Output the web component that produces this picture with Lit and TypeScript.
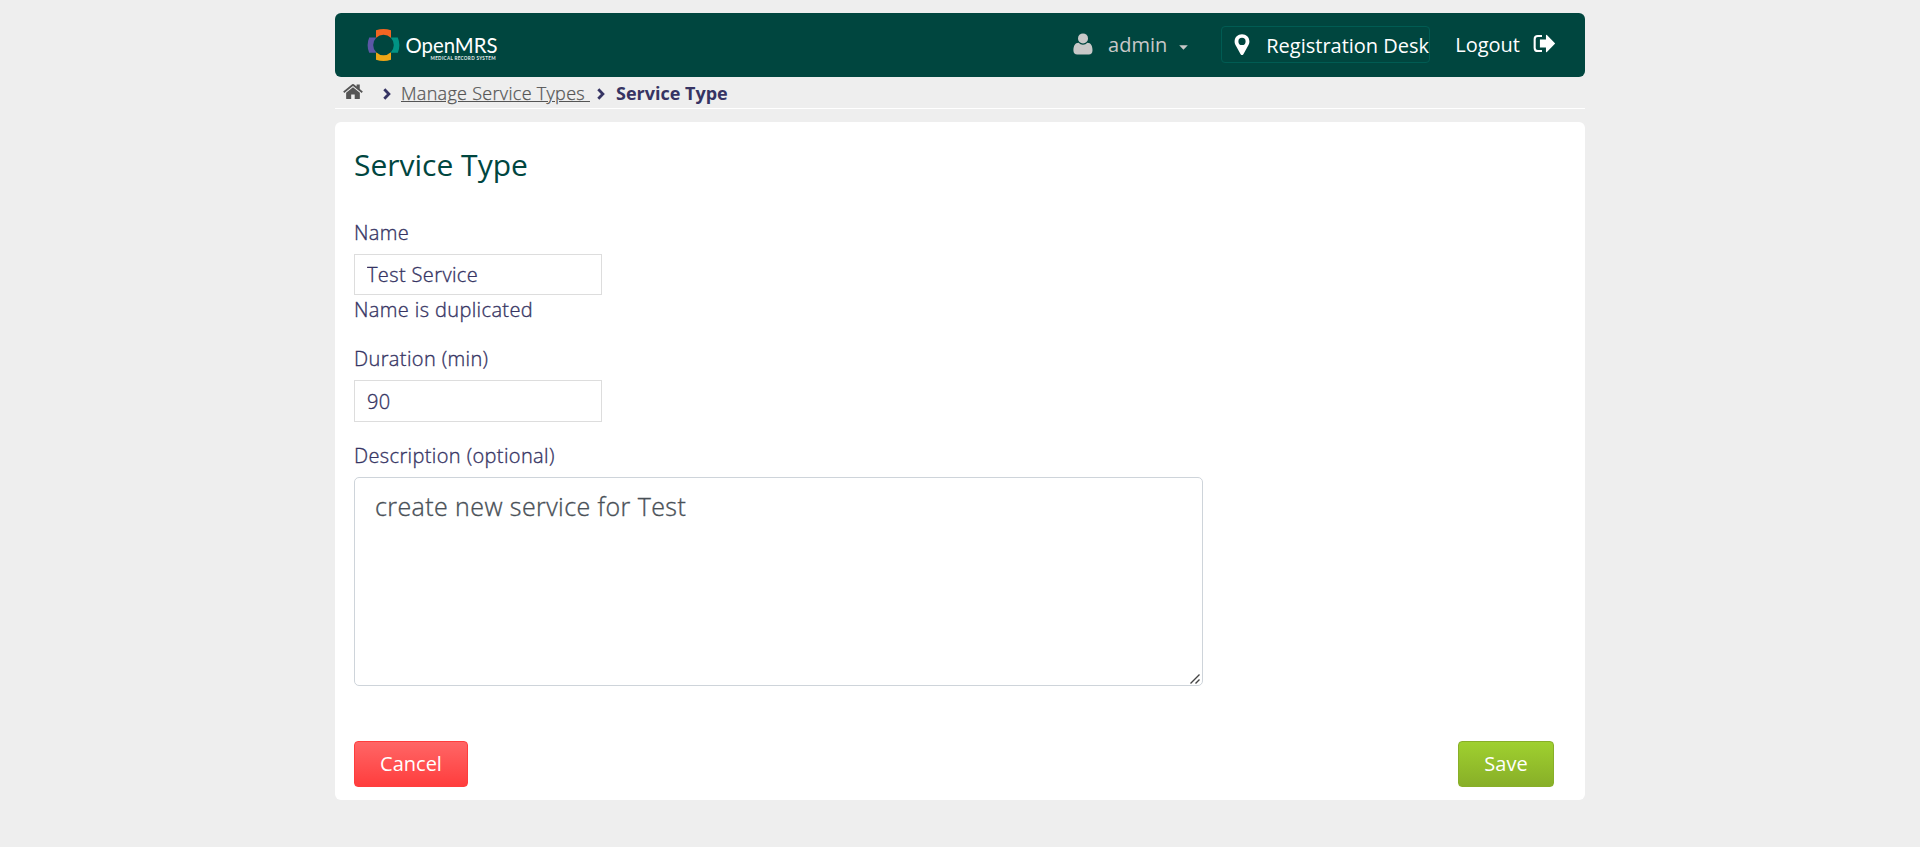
import { LitElement, html, css } from "lit";
import { customElement, property } from "lit/decorators.js";

@customElement("brand-logo")
class BrandLogo extends LitElement {
  static styles = css`
    :host { display: block; width: 140px; height: 40px; }
    svg { display: block; }
    .word { font: 400 21px Lato, sans-serif; fill: #fff; }
    .tag { font: 700 4.6px Lato, sans-serif; fill: #e4ecea; }
  `;
  render() {
    return html`<svg width="140" height="40" viewBox="0 0 140 40">
      <path d="M10 5.2Q17.5 2.6 25 5.2V13H10Z" fill="#f26522" />
      <path d="M10 34.8Q17.5 37.4 25 34.8V27H10Z" fill="#eea616" />
      <path d="M3.2 12.4Q0 20 3.2 27.7H10V12.4Z" fill="#5b57a6" />
      <path d="M31.8 12.4Q35 20 31.8 27.7H25V12.4Z" fill="#009384" />
      <circle cx="17.5" cy="20" r="10.3" fill="#00463f" />
      <text class="word" x="39.5" y="27.5" textLength="92" lengthAdjust="spacingAndGlyphs">OpenMRS</text>
      <text class="tag" x="64.5" y="34.8" textLength="65" lengthAdjust="spacing">MEDICAL RECORD SYSTEM</text>
    </svg>`;
  }
}

@customElement("app-header")
class AppHeader extends LitElement {
  @property() user = "admin";
  @property() location = "Registration Desk";
  static styles = css`
    :host {
      display: flex; align-items: flex-start; height: 64px; padding-left: 31px;
      box-sizing: border-box; background: #00463f; border-radius: 6px; color: #fff;
      font-size: 20px; line-height: 26px; white-space: nowrap;
    }
    brand-logo { margin-top: 12px; }
    .menu { display: flex; margin-left: auto; padding-right: 29px; }
    svg { display: block; flex: none; }
    .user { display: flex; margin-top: 19px; color: #c8c8c8; }
    .person { margin: 1px 15px 0 0; }
    .caret { margin: 13px 0 0 12px; }
    .location {
      display: flex; box-sizing: border-box; width: 209px; height: 37px; margin: 13px 25px 0 33px;
      padding: 6px 0 0 12px; border: 1px solid #005c53; border-radius: 4px;
    }
    .pin { margin: 1px 16px 0 0; }
    .logout { display: flex; margin-top: 19px; }
    .exit { margin: 2px 0 0 13px; }
  `;
  render() {
    return html`
      <brand-logo></brand-logo>
      <div class="menu">
        <div class="user">
          <svg class="person" width="20" height="22" viewBox="0 0 20 22" fill="#c8c8c8">
            <path d="M5.6 9.8C2 9.8.4 13.2.4 17.4C.4 20 2 21.4 4.2 21.4H15.8C18 21.4 19.5 20 19.5 17.4C19.5 13.2 18 9.8 14.4 9.8A6 6 0 0 1 5.6 9.8Z" />
            <circle cx="10" cy="5.4" r="5" />
          </svg>
          <span>${this.user}</span>
          <svg class="caret" width="9" height="5" viewBox="0 0 9 5"><path d="M.2.2H8.8L4.5 4.8Z" fill="#c8c8c8" /></svg>
        </div>
        <div class="location">
          <svg class="pin" width="16" height="22" viewBox="0 0 16 22">
            <path fill="#fff" fill-rule="evenodd" d="M8 .3C3.8.3.6 3.4.6 7.4C.6 9 1 10 1.5 11L6.6 20.2Q8 22 9.4 20.2L14.5 11C15 10 15.4 9 15.4 7.4C15.4 3.4 12.2.3 8 .3ZM8 3.8A3.6 3.6 0 1 1 8 11A3.6 3.6 0 1 1 8 3.8Z" />
          </svg>
          <span>${this.location}</span>
        </div>
        <div class="logout">
          <span>Logout</span>
          <svg class="exit" width="23" height="19" viewBox="0 0 22 18">
            <path d="M8.6 1.8H4.6Q1.6 1.8 1.6 4.8V13.2Q1.6 16.2 4.6 16.2H8.6" fill="none" stroke="#fff" stroke-width="2" />
            <path d="M6.6 5.2H12.4V1.2Q12.6.4 13.3.8L21 8.7Q21.3 9 21 9.3L13.3 17.2Q12.6 17.6 12.4 16.8V12.8H6.6Z" fill="#fff" />
          </svg>
        </div>
      </div>`;
  }
}

@customElement("bread-crumbs")
class BreadCrumbs extends LitElement {
  static styles = css`
    :host {
      display: flex; align-items: flex-start; height: 32px; box-sizing: border-box; padding: 4px 0 0 8px;
      border-bottom: 1px solid #fff; font-size: 18px; line-height: 24px; white-space: pre; color: #363463;
    }
    svg { display: block; flex: none; }
    .home { margin-top: 2px; }
    .sep { margin: 7px 11px 0 7px; }
    .first { margin: 7px 10px 0 20px; }
    .link {
      color: #555; font-weight: 300; letter-spacing: 0.3px; -webkit-text-stroke: 0.25px; text-decoration: underline;
    }
    .here { font-weight: 700; }
  `;
  chevron(cls: string) {
    return html`<svg class="sep ${cls}" width="8" height="12" viewBox="0 0 8 12">
      <path d="M1.3 1.2L5.9 6L1.3 10.8" fill="none" stroke="#363463" stroke-width="2.8" />
    </svg>`;
  }
  render() {
    return html`<svg class="home" width="20" height="17" viewBox="0 0 21 17" fill="#555">
        <path d="M10.5 4L3.3 9.8V15.8Q3.3 16.5 4 16.5H8.6V11.7H12.3V16.5H17Q17.7 16.5 17.7 15.8V9.8Z" />
        <path d="M.2 8.6L9.6.9Q10.5.2 11.4.9L14.3 3.3V1.1H17.6V6L20.8 8.6L19.7 10L10.5 2.6L1.3 10Z" />
      </svg>${this.chevron("first")}<a class="link">Manage Service Types </a>${this.chevron("")}<span class="here">Service Type</span>`;
  }
}

@customElement("app-root")
class AppRoot extends LitElement {
  static styles = css`
    :host {
      display: block; min-height: 847px; box-sizing: border-box; padding-top: 13px; background: #eee;
      font-family: "Open Sans", sans-serif; color: #363463;
    }
    .page { width: 1250px; margin: 0 auto; }
    .card {
      box-sizing: border-box; height: 678px; margin-top: 13px; padding: 23px 31px 13px 19px;
      background: #fff; border-radius: 6px;
    }
    h2 { margin: 0 0 35px; font-size: 30px; line-height: 40px; font-weight: 400; color: #00463f; }
    .field {
      display: block; font-size: 20px; line-height: 26px; font-weight: 300;
      letter-spacing: 0.38px; -webkit-text-stroke: 0.35px;
    }
    .duration { margin-top: 23px; }
    .description { margin-top: 21px; }
    .label { display: block; margin-bottom: 8px; }
    input {
      display: block; box-sizing: border-box; width: 248px; height: 41px; padding: 0 12px;
      border: 1px solid #ddd; font: inherit; letter-spacing: inherit; color: inherit; background: #fff; outline: none;
    }
    .duration input { height: 42px; }
    .error { display: block; margin-top: 2px; }
    .area { display: block; position: relative; width: 849px; }
    .grip { position: absolute; right: 3px; bottom: 2px; }
    textarea {
      display: block; box-sizing: border-box; width: 849px; height: 209px; padding: 9px 20px;
      border: 1px solid #ced4da; border-radius: 5px; font: 300 25px/38px "Open Sans", sans-serif;
      letter-spacing: 0.42px; color: #495057; background: #fff; outline: none; resize: none;
    }
    .actions { display: flex; justify-content: space-between; margin-top: 55px; }
    button {
      height: 46px; box-sizing: border-box; padding: 0; border-radius: 4px; color: #fff;
      font: 400 20px/26px "Open Sans", sans-serif;
    }
    .cancel { width: 114px; border: 1px solid #ff3d3d; background: linear-gradient(#ff6666, #ff3d3d); }
    .save { width: 96px; border: 1px solid #88af28; background: linear-gradient(#9fd02f, #88af28); }
  `;
  render() {
    return html`<div class="page">
      <app-header></app-header>
      <bread-crumbs></bread-crumbs>
      <main class="card">
        <h2>Service Type</h2>
        <label class="field"><span class="label">Name</span><input .value=${"Test Service"} /><span class="error">Name is duplicated</span></label>
        <label class="field duration"><span class="label">Duration (min)</span><input .value=${"90"} /></label>
        <label class="field description"><span class="label">Description (optional)</span><span class="area"><textarea .value=${"create new service for Test"}></textarea><svg class="grip" width="10" height="10" viewBox="0 0 10 10"><path d="M.5 9.5L9.5.5M5.5 9.5L9.5 5.5" stroke="#444" stroke-width="1.4" /></svg></span></label>
        <div class="actions"><button class="cancel">Cancel</button><button class="save">Save</button></div>
      </main>
    </div>`;
  }
}
